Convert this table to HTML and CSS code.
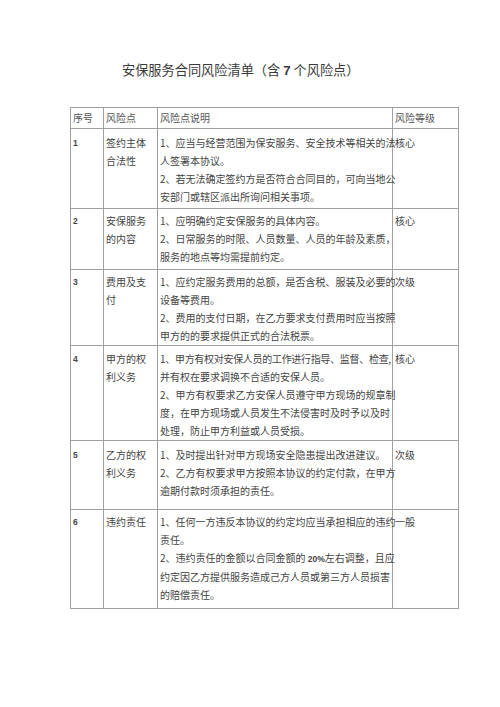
FILE: index.html
```html
<!DOCTYPE html>
<html lang="zh-CN">
<head>
<meta charset="utf-8">
<title>安保服务合同风险清单</title>
<link rel="stylesheet" href="styles.css">
</head>
<body>
<div class="page">
  <h1 class="title">安保服务合同风险清单（含 <span class="num">7</span> 个风险点）</h1>
  <table class="risk">
    <colgroup>
      <col class="c-no">
      <col class="c-point">
      <col class="c-desc">
      <col class="c-level">
    </colgroup>
    <tr class="head">
      <td>序号</td><td>风险点</td><td>风险点说明</td><td>风险等级</td>
    </tr>
    <tr class="r1">
      <td class="no">1</td>
      <td><div class="ln">签约主体</div><div class="ln">合法性</div></td>
      <td>
        <div class="ln">1、应当与经营范围为保安服务、安全技术等相关的法</div>
        <div class="ln">人签署本协议。</div>
        <div class="ln">2、若无法确定签约方是否符合合同目的，可向当地公</div>
        <div class="ln">安部门或辖区派出所询问相关事项。</div>
      </td>
      <td>核心</td>
    </tr>
    <tr class="r2">
      <td class="no">2</td>
      <td><div class="ln">安保服务</div><div class="ln">的内容</div></td>
      <td>
        <div class="ln">1、应明确约定安保服务的具体内容。</div>
        <div class="ln">2、日常服务的时限、人员数量、人员的年龄及素质，</div>
        <div class="ln">服务的地点等均需提前约定。</div>
      </td>
      <td>核心</td>
    </tr>
    <tr class="r3">
      <td class="no">3</td>
      <td><div class="ln">费用及支</div><div class="ln">付</div></td>
      <td>
        <div class="ln">1、应约定服务费用的总额，是否含税、服装及必要的</div>
        <div class="ln">设备等费用。</div>
        <div class="ln">2、费用的支付日期，在乙方要求支付费用时应当按照</div>
        <div class="ln">甲方的的要求提供正式的合法税票。</div>
      </td>
      <td>次级</td>
    </tr>
    <tr class="r4">
      <td class="no">4</td>
      <td><div class="ln">甲方的权</div><div class="ln">利义务</div></td>
      <td>
        <div class="ln tight">1、甲方有权对安保人员的工作进行指导、监督、检查,</div>
        <div class="ln">并有权在要求调换不合适的安保人员。</div>
        <div class="ln">2、甲方有权要求乙方安保人员遵守甲方现场的规章制</div>
        <div class="ln">度，在甲方现场或人员发生不法侵害时及时予以及时</div>
        <div class="ln">处理，防止甲方利益或人员受损。</div>
      </td>
      <td>核心</td>
    </tr>
    <tr class="r5">
      <td class="no">5</td>
      <td><div class="ln">乙方的权</div><div class="ln">利义务</div></td>
      <td>
        <div class="ln">1、及时提出针对甲方现场安全隐患提出改进建议。</div>
        <div class="ln">2、乙方有权要求甲方按照本协议的约定付款，在甲方</div>
        <div class="ln">逾期付款时须承担的责任。</div>
      </td>
      <td>次级</td>
    </tr>
    <tr class="r6">
      <td class="no">6</td>
      <td><div class="ln">违约责任</div></td>
      <td>
        <div class="ln">1、任何一方违反本协议的约定均应当承担相应的违约</div>
        <div class="ln">责任。</div>
        <div class="ln">2、违约责任的金额以合同金额的 <span class="pct">20%</span>左右调整，且应</div>
        <div class="ln">约定因乙方提供服务造成己方人员或第三方人员损害</div>
        <div class="ln">的赔偿责任。</div>
      </td>
      <td>一般</td>
    </tr>
  </table>
</div>
</body>
</html>
```

FILE: styles.css
```css
html, body {
  margin: 0;
  padding: 0;
  background: #ffffff;
}

body {
  font-family: "Noto Sans CJK SC", "Noto Sans", sans-serif;
  color: #444444;
}

.page {
  padding-top: 60px;
}

.title {
  margin: 0;
  padding-left: 122px;
  font-size: 13.2px;
  line-height: 20px;
  font-weight: normal;
  color: #3a3a3a;
  white-space: nowrap;
}

.title .num {
  font-family: "Liberation Sans", sans-serif;
  font-weight: bold;
}

.risk {
  margin-top: 26px;
  margin-left: 70px;
  border-collapse: collapse;
  table-layout: fixed;
  width: 388px;
  font-size: 10px;
  line-height: 18px;
}

.c-no { width: 33px; }
.c-point { width: 54px; }
.c-desc { width: 235px; }
.c-level { width: 66px; }

.risk td {
  border: 1px solid #a0a0a0;
  vertical-align: top;
  padding: 4px 0 0 2px;
  white-space: nowrap;
  overflow: visible;
  box-sizing: border-box;
}

.risk .head td {
  height: 21px;
  padding: 1px 0 0 2px;
  color: #555555;
}

.ln {
  white-space: nowrap;
}

.tight {
  letter-spacing: -0.3px;
}

.no {
  font-family: "Liberation Sans", sans-serif;
  font-size: 8.5px;
  font-weight: bold;
  color: #444444;
}

.pct {
  font-family: "Liberation Sans", sans-serif;
  font-size: 8.5px;
  font-weight: bold;
}

.r1 td { height: 80px; padding-top: 5px; }
.r2 td { height: 61px; padding-top: 3px; }
.r3 td { height: 74px; padding-top: 3px; }
.r4 td { height: 93px; padding-top: 4px; }
.r5 td { height: 69px; padding-top: 5px; }
.r6 td { height: 99px; padding-top: 3px; }
```
